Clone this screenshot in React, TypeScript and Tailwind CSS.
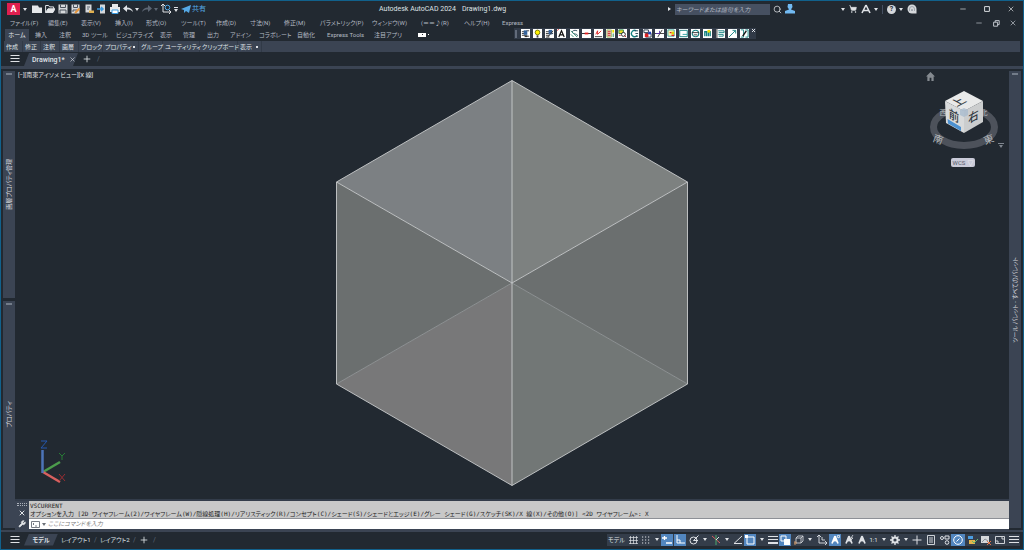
import React from "react";
import {
  LuMinus,
  LuPlus,
  LuSearch,
  LuShoppingCart,
  LuWrench,
  LuX,
} from "react-icons/lu";

interface IconProps {
  children: React.ReactNode;
  size?: string;
}

const Icon: React.FC<IconProps> = ({ children, size = "size-[10px]" }) => (
  <svg viewBox="0 0 10 10" className={`${size} shrink-0`} fill="none" stroke="currentColor">
    {children}
  </svg>
);

const Caret = () => (
  <svg viewBox="0 0 4 3" className="h-[3px] w-1 shrink-0" fill="currentColor">
    <path d="M0 0h4L2 3z" />
  </svg>
);

const quickAccess = [
  {
    label: "新規作成",
    icon: (
      <path d="M0 1.500h6l1 2h3V9H0z" fill="#e6e8ea" stroke="none" />
    ),
  },
  {
    label: "開く",
    icon: (
      <>
        <path d="M.6 8.500v-7h3l1 1.400h4v2" />
        <path d="M.6 8.500 3 4.800h7L8 8.500z" fill="#e6e8ea" />
      </>
    ),
  },
  {
    label: "上書き保存",
    icon: (
      <>
        <path d="M.5 .5h9v9h-9z" fill="#d5d8db" stroke="none" />
        <path d="M2.500 .5v3h5v-3M2 9.500V6h6v3.500" stroke="#4a525d" />
      </>
    ),
  },
  {
    label: "名前を付けて保存",
    icon: (
      <>
        <path d="M.5 .5h8v9h-8z" fill="#d5d8db" stroke="none" />
        <path d="M2.500 .5v3h4v-3M2 8V6h4" stroke="#4a525d" />
        <path d="m4 9 4.500-4.500" stroke="#e4953b" strokeWidth="2" />
      </>
    ),
  },
  {
    label: "Web から開く",
    icon: (
      <>
        <path d="M1.500 .5h6v8h-6z" fill="#d5d8db" stroke="none" />
        <path d="M3 3h3M3 5h2" stroke="#5c6673" />
        <path d="M5 9V6.500h5V9z" fill="#e0b050" stroke="none" />
      </>
    ),
  },
  {
    label: "Web に保存",
    icon: (
      <>
        <path d="M3 .5h5v9H3z" fill="#d5d8db" stroke="none" />
        <path d="M0 5h5M4 3l2 2-2 2" stroke="#3b9be0" strokeWidth="1.500" />
      </>
    ),
  },
  {
    label: "印刷",
    icon: (
      <>
        <path d="M2 0h6v3H2zM0 3h10v5H0z" fill="#e6e8ea" stroke="none" />
        <path d="M2 6h6v3.500H2z" fill="#fff" stroke="#3b9be0" />
      </>
    ),
  },
];

const menus = [
  { label: "ファイル(F)", width: "w-[38px]" },
  { label: "編集(E)", width: "w-[33px]" },
  { label: "表示(V)", width: "w-[34px]" },
  { label: "挿入(I)", width: "w-[31px]" },
  { label: "形式(O)", width: "w-[35px]" },
  { label: "ツール(T)", width: "w-[35px]" },
  { label: "作成(D)", width: "w-[34px]" },
  { label: "寸法(N)", width: "w-[34px]" },
  { label: "修正(M)", width: "w-[36px]" },
  { label: "パラメトリック(P)", width: "w-[52px]" },
  { label: "ウィンドウ(W)", width: "w-[49px]" },
  { label: "(＝＝♪(R)", width: "w-[43px]" },
  { label: "ヘルプ(H)", width: "w-[38px]" },
  { label: "Express", width: "w-[30px]" },
];

const ribbonTabs = [
  { label: "挿入", width: "w-[24px]" },
  { label: "注釈", width: "w-[23px]" },
  { label: "3D ツール", width: "w-[34px]" },
  { label: "ビジュアライズ", width: "w-[44px]" },
  { label: "表示", width: "w-[23px]" },
  { label: "管理", width: "w-[24px]" },
  { label: "出力", width: "w-[23px]" },
  { label: "アドイン", width: "w-[29px]" },
  { label: "コラボレート", width: "w-[38px]" },
  { label: "自動化", width: "w-[30px]" },
  { label: "Express Tools", width: "w-[47px]" },
  { label: "注目アプリ", width: "w-[44px]" },
];

const panels = [
  { label: "作成", width: "w-[19px]" },
  { label: "修正", width: "w-[18px]" },
  { label: "注釈", width: "w-[19px]" },
  { label: "画層", width: "w-[19px]" },
  { label: "ブロック", width: "w-[24px]" },
  { label: "プロパティ", width: "w-[36px]", more: true },
  { label: "グループ", width: "w-[24px]" },
  { label: "ユーティリティ", width: "w-[37px]" },
  { label: "クリップボード", width: "w-[38px]" },
  { label: "表示", width: "w-[24px]", more: true },
];

const expressTools = [
  { label: "画層を分離", icon: <><path d="M1 3h4M1 5h4M1 7h4M6 2h3M6 8h3" stroke="#333" /><path d="M3 1.500h4v5H3z" fill="#35639b" stroke="none" /><path d="M4 7h3v2H4z" fill="#333" stroke="none" /></> },
  { label: "画層を表示", icon: <><circle cx="5" cy="3.800" r="2.600" fill="#fff200" stroke="#777700" /><path d="M4 7h2v2.500H4z" fill="#444" stroke="none" /></> },
  { label: "画層を非表示", icon: <><path d="M1 3h4M1 5h8M1 7h4M1 9h4" stroke="#333" /><path d="M4 1h4v5H4z" fill="#35639b" stroke="none" /><path d="m3 9 6-7" stroke="#333" /></> },
  { label: "円弧文字", icon: <><path d="m2 9 3-7 3 7M3 6.500h4" stroke="#111" strokeWidth="1.300" /><path d="M0 2 2 0" stroke="#d33" /></> },
  { label: "文字マスク", icon: <><path d="M8 2C3 0 1 4 4 5s5 1 4 3" stroke="#245" /><path d="m1 2 7 7M1 6l3 3" stroke="#2b8a72" /></> },
  { label: "文字調整", icon: <><path d="M0 5h10" stroke="#222" /><path d="M3 5h4" stroke="#e02020" strokeWidth="2" /></> },
  { label: "寸法", icon: <><path d="M1 8.500h8" stroke="#333" /><path d="m2 6 2-4v4l4-4" stroke="#d22" /></> },
  { label: "ブロック置換", icon: <><path d="M1 1h5v8H1z" fill="#f3c2b7" stroke="#9b6" /><path d="M2 3h3M2 5h3M2 7h3" stroke="#c33" /><path d="M7 1h2v3H7z" fill="#f0df00" stroke="none" /><path d="M8 5v4" stroke="#187a48" /></> },
  { label: "オブジェクト抽出", icon: <><path d="M1 1h5v4H1z" fill="#e8da28" stroke="#1e7f4e" /><circle cx="6" cy="6" r="2.200" fill="#fff" stroke="#222" /><path d="m7 7 2 2M1 7h2" stroke="#b22" /></> },
  { label: "雲マーク", icon: <><path d="M7 2a3.500 3.500 0 1 0 1 5" stroke="#138080" strokeWidth="1.500" /><path d="M5 2h4M6 5h3M6 8h3" stroke="#245" /></> },
  { label: "クリップ", icon: <><path d="M1 1h5v3H1zM3 5h6v4H3z" stroke="#234" /><path d="M2 5h4v4H2z" fill="#d22" stroke="none" /><path d="M6 3h3v3H6z" fill="#2742b8" stroke="none" /></> },
  { label: "トリム", icon: <><path d="M0 5h10M8 1 3 9" stroke="#333" /><path d="M1 5h4M5 2v3" stroke="#5c35b0" /></> },
  { label: "ハッチング", icon: <><path d="M1 1h7v7H1z" fill="#fff6b0" stroke="#38a0a0" /><path d="M5 3h3v3H5z" fill="#e4d400" stroke="none" /><path d="M5 7h3M3 4h2" stroke="#d22" strokeWidth="1.500" /></> },
  { label: "ワイプアウト", icon: <><path d="M.8 1.500h8.400v7H.8z" stroke="#138080" /><path d="M4 6h5" stroke="#2aa0a0" /></> },
  { label: "オブジェクト選択", icon: <><circle cx="5" cy="5" r="3.600" stroke="#138080" strokeWidth="1.300" /><path d="M1 4h8M3 6.500h4" stroke="#333" /></> },
  { label: "高速選択", icon: <><path d="M2 8V3h2v5M6 8V3h2v5" stroke="#138080" strokeWidth="1.500" /><path d="M5 1h3v3H5z" fill="#efe000" stroke="none" /></> },
  { label: "属性書き出し", icon: <><path d="M1 0v10" stroke="#222" /><path d="M2.500 2H9v2H3M2.500 6H8v2H3" stroke="#138080" /></> },
  { label: "ストレッチ", icon: <><path d="m1 9 7-7M5 1.500h3.500V5" stroke="#138080" /></> },
  { label: "図面比較", icon: <><path d="M1 1h3v8H1M6 1h3v8H6" stroke="#138080" /><path d="m3 8 4-6" stroke="#111" strokeWidth="1.500" /></> },
];

const AnnoPath = () => (
  <path d="M5 1 2 8.500M5 1l3 7.500M3.500 6 5 5l1.500 1" strokeWidth="1.700" />
);

const statusItems: {
  label: string;
  width: string;
  icon?: React.ReactNode;
  text?: string;
  on?: boolean;
}[] = [
  { label: "モデル空間", width: "w-[19px]", text: "モデル" },
  { label: "グリッド", width: "w-[13px]", icon: <path d="M2.500 1v8M5.500 1v8M8.500 1v8M1 2.500h9M1 5.500h9M1 8.500h9" strokeWidth=".7" /> },
  { label: "スナップ", width: "w-[13px]", icon: <path d="M1 2h8M1 5h8M1 8h8" strokeDasharray="1.200 1.800" strokeWidth="1.200" /> },
  { label: "スナップの設定", width: "w-[9px]" },
  { label: "ダイナミック入力", width: "w-[13px]", on: true, icon: <path d="M0 3h5M2.500 1v4M4 8h6" strokeWidth="1.300" /> },
  { label: "直交モード", width: "w-[13px]", on: true, icon: <path d="M2 0v8h8M2 5h3v3" /> },
  { label: "極トラッキング", width: "w-[13px]", icon: <><circle cx="4.500" cy="5.500" r="3.500" /><path d="m4.500 5.500 5-5M4.500 5.500H9" /></> },
  { label: "極トラッキングの設定", width: "w-[9px]" },
  { label: "アイソメ作図", width: "w-[13px]", icon: <><path d="m1 1 8 7" stroke="#d76060" /><path d="M5 0v10" stroke="#4aa86c" /><path d="m5 5 3-3" /></> },
  { label: "アイソメ作図の設定", width: "w-[9px]" },
  { label: "オブジェクト スナップ トラッキング", width: "w-[13px]", icon: <path d="M9 1 1 8.500h8" /> },
  { label: "オブジェクト スナップ", width: "w-[13px]", on: true, icon: <><path d="M2 2h7v7H2z" /><path d="M0 0h3v3H0z" fill="currentColor" stroke="none" /></> },
  { label: "オブジェクト スナップの設定", width: "w-[9px]" },
  { label: "線の太さ", width: "w-[13px]", icon: <><path d="M0 1.500h10M0 4.500h10" /><path d="M0 8h10" strokeWidth="2" /></> },
  { label: "透過性", width: "w-[13px]", on: true, icon: <><path d="M1 1h5v5H1z" /><path d="M4 4h6v6H4z" fill="#fff" stroke="none" /></> },
  { label: "3D オブジェクト スナップ", width: "w-[13px]", icon: <><path d="M2 3h5v5H2zM2 3l2-2h5v5L7 8M7 3l2-2" strokeWidth=".8" /><path d="M0 7h2v2H0z" stroke="#c79469" /></> },
  { label: "3D オブジェクト スナップの設定", width: "w-[9px]" },
  { label: "ダイナミック UCS", width: "w-[15px]", icon: <path d="M2 0v8h8M5 2v3h3M0 2l2-2 2 2M8 6l2 2-2 2" strokeWidth=".9" /> },
  { label: "注釈オブジェクトを表示", width: "w-[13px]", on: true, icon: <><AnnoPath /><circle cx="8.500" cy="1.500" r="1.200" /></> },
  { label: "尺度を自動的に追加", width: "w-[13px]", icon: <><AnnoPath /><path d="m9 0-2 3h2L7 5" strokeWidth=".8" /></> },
  { label: "注釈尺度", width: "w-[13px]", icon: <AnnoPath /> },
  { label: "ビューの尺度", width: "w-[11px]", text: "1:1" },
  { label: "尺度リスト", width: "w-[9px]" },
  { label: "ワークスペースの切り替え", width: "w-[13px]", icon: <><circle cx="5" cy="5" r="2.600" strokeWidth="2" /><path d="M5 0v2M5 8v2M0 5h2M8 5h2M1.500 1.500l1.500 1.500M7 7l1.500 1.500M8.500 1.500 7 3M3 7 1.500 8.500" strokeWidth="1.300" /></> },
  { label: "ワークスペースの設定", width: "w-[9px]" },
  { label: "注釈モニター", width: "w-[13px]", icon: <path d="M5 .5v9M.5 5h9" /> },
  { label: "クイック プロパティ", width: "w-[15px]", icon: <path d="M1.500 .5h7v9h-7zM3 3h4M3 5h4M3 7h4" strokeWidth=".9" /> },
  { label: "オブジェクトを選択表示", width: "w-[13px]", icon: <><circle cx="2" cy="3" r="1.500" /><path d="M5 1h4v3H5z" /><circle cx="7" cy="7.500" r="1.800" /></> },
  { label: "グラフィックス パフォーマンス", width: "w-[15px]", on: true, icon: <><circle cx="5" cy="5" r="4.300" /><path d="m3.500 6.500 3-3" /></> },
  { label: "クリーン スクリーン", width: "w-[13px]", icon: <><path d="M0 1h5v3H0z" fill="#4b9de0" stroke="none" /><path d="M1 5h6v4H1z" fill="#e4b54c" stroke="none" /><path d="m4 6 2 2 4-4" stroke="#65b96d" /></> },
  { label: "図面の通知", width: "w-[13px]", icon: <><path d="M0 1h8v7H0z" fill="#d5d8db" stroke="none" /><path d="m1 7 3-3 3 2" stroke="#8b9098" /><path d="m6 6 4 4M10 6l-4 4" stroke="#e0764b" /></> },
  { label: "全画面表示", width: "w-[15px]", icon: <path d="M.5 1.500h9v7h-9zM6 3h2v2M4 7H2V5" strokeWidth=".9" /> },
  { label: "カスタマイズ", width: "w-[13px]", icon: <path d="M0 1.500h10M0 4.500h10M0 7.500h10" strokeWidth="1.100" /> },
];

const TitleBar = () => (
  <header className="flex h-4 shrink-0 items-center text-[#dfe2e6]">
    <div className="flex w-[378px] shrink-0 items-center gap-[3px] pl-[6px]">
      <button
        aria-label="アプリケーション メニュー"
        className="flex h-3 w-[13px] items-center justify-center bg-[#e01f4f] text-[9px] font-bold leading-3 text-white"
      >
        A
      </button>
      <Caret />
      <div className="flex items-center gap-[3px] pl-[2px]">
        {quickAccess.map((q) => (
          <button key={q.label} aria-label={q.label}>
            <Icon>{q.icon}</Icon>
          </button>
        ))}
        <button aria-label="元に戻す" className="flex items-center gap-[2px]">
          <Icon>
            <path d="M4 1 0 4.500 4 8V5.500c3 0 4 .5 6 2.500-.5-3-3-4.500-6-4.500z" fill="currentColor" stroke="none" />
          </Icon>
          <Caret />
        </button>
        <button aria-label="やり直し" className="flex items-center gap-[2px] text-[#5c6673]">
          <Icon>
            <path d="m6 1 4 3.500L6 8V5.500C3 5.500 2 6 0 8c.5-3 3-4.500 6-4.500z" fill="currentColor" stroke="none" />
          </Icon>
          <Caret />
        </button>
        <button aria-label="UCS アイコン">
          <Icon>
            <path d="M2 0v8h8M0 2l2-2 2 2M8 6l2 2-2 2" />
            <circle cx="6.500" cy="3.500" r="2.300" stroke="#4fa9e8" />
          </Icon>
        </button>
      </div>
      <button aria-label="カスタマイズ" className="flex flex-col items-center gap-px">
        <span className="h-px w-1 bg-current" />
        <Caret />
      </button>
      <button className="flex items-center gap-px whitespace-nowrap text-[#55a9e6]">
        <Icon>
          <path d="m0 5 10-4-2 8-3-2-2 2V6z" fill="currentColor" stroke="none" />
        </Icon>
        共有
      </button>
    </div>
    <h1 className="flex gap-[6px] whitespace-nowrap">
      <span>Autodesk AutoCAD 2024</span>
      <span>Drawing1.dwg</span>
    </h1>
    <div className="ml-auto flex items-center">
      <svg viewBox="0 0 3 4" className="mr-1 h-1 w-[3px]" fill="currentColor">
        <path d="M0 0v4l3-2z" />
      </svg>
      <input
        aria-label="検索"
        placeholder="キーワードまたは語句を入力"
        className="h-[11px] w-[95px] bg-[#465061] px-px text-[6px] italic placeholder:text-[#b4bac3]"
      />
      <button aria-label="検索を実行" className="ml-[3px]">
        <LuSearch className="size-[9px]" />
      </button>
      <button aria-label="サインイン" className="ml-[3px] text-[#72baf2]">
        <Icon>
          <path d="M3 0h4l.5 3L6 5.500 10 7v2.500H0V7l4-1.500L2.500 3z" fill="currentColor" stroke="none" />
        </Icon>
      </button>
      <div className="ml-[46px] flex items-center gap-1">
        <Caret />
        <button aria-label="Autodesk App Store">
          <LuShoppingCart className="size-2" fill="currentColor" />
        </button>
        <button aria-label="Autodesk アプリ" className="flex items-center gap-[3px]">
          <Icon>
            <path d="M5 1 1 9M5 1l4 8M2 6.500h6" strokeWidth="1.600" />
          </Icon>
          <Caret />
        </button>
        <span className="h-[9px] w-px bg-[#465061]" />
        <button aria-label="ヘルプ" className="flex items-center gap-[3px]">
          <span className="flex size-[9px] items-center justify-center rounded-full bg-[#d5d8db] font-bold leading-none text-[#222931]">
            ?
          </span>
          <Caret />
        </button>
        <button aria-label="アシスタント">
          <Icon>
            <path d="M5 .5a4.500 4.500 0 1 0 0 9h4.500V5A4.500 4.500 0 0 0 5 .5" fill="#d5d8db" stroke="none" />
            <path d="M2.500 7V5a2.500 2.500 0 0 1 5 0v2M4.500 7V5.500h1V7" stroke="#9299a2" strokeWidth=".8" />
          </Icon>
        </button>
      </div>
      <div className="ml-[42px] mr-2 flex gap-4">
        <button aria-label="最小化"><LuMinus className="size-2" /></button>
        <button aria-label="最大化">
          <Icon size="size-2">
            <path d="M2 2h6v6H2z" strokeWidth="1.200" />
          </Icon>
        </button>
        <button aria-label="閉じる"><LuX className="size-2" /></button>
      </div>
    </div>
  </header>
);

const MenuBar = () => (
  <nav className="flex h-[11px] shrink-0 items-center pl-[9px] text-[6px] text-[#b4bac3]">
    {menus.map((m) => (
      <button key={m.label} className={`${m.width} whitespace-nowrap text-left`}>
        {m.label}
      </button>
    ))}
    <div className="ml-auto mr-[6px] flex gap-[9px] text-[#c4c9d0]">
      <button aria-label="図面を最小化"><LuMinus className="size-2" /></button>
      <button aria-label="図面を元に戻す">
        <Icon size="size-2">
          <path d="M2 4h5v5H2zM4 4V2h5v5H7" strokeWidth="1.200" />
        </Icon>
      </button>
      <button aria-label="図面を閉じる"><LuX className="size-2" /></button>
    </div>
  </nav>
);

const Ribbon = () => (
  <>
    <div className="flex h-[13px] shrink-0 items-center pl-1 text-[6px] text-[#b4bac3]">
      <button className="mr-[6px] h-3 w-6 self-end bg-[#3b4453] text-[#e3e6e9]">ホーム</button>
      {ribbonTabs.map((t) => (
        <button key={t.label} className={`${t.width} whitespace-nowrap text-left`}>
          {t.label}
        </button>
      ))}
      <button aria-label="リボンの表示" className="flex items-center gap-[2px]">
        <span className="flex h-1 w-2 items-center justify-center bg-white text-[#222931]">
          <span className="size-px bg-current" />
        </span>
        <span className="size-px bg-white" />
      </button>
      <div className="ml-[85px] flex h-[11px] w-[242px] items-center self-start bg-[#313a47] pl-px">
        <span className="mr-1 h-2 w-[2px] bg-[#626b7a]" />
        <div className="flex flex-1 justify-between">
          {expressTools.map((e) => (
            <button key={e.label} aria-label={e.label} className="bg-white">
              <Icon size="size-[9px]">{e.icon}</Icon>
            </button>
          ))}
        </div>
        <button aria-label="ツールバーを閉じる" className="ml-[2px] self-start text-white">
          <LuX className="size-[5px]" strokeWidth={4} />
        </button>
      </div>
    </div>
    <div className="mx-[3px] flex h-[11px] shrink-0 items-center bg-[#3b4453] text-[6px] text-[#dfe2e6]">
      {panels.map((p) => (
        <button
          key={p.label}
          className={`${p.width} flex h-full items-center justify-between whitespace-nowrap border-r border-[#313a47] pl-[2px]`}
        >
          {p.label}
          {p.more && <span className="mr-[3px] size-[2px] bg-current" />}
        </button>
      ))}
    </div>
  </>
);

const MenuLines = () => (
  <Icon>
    <path d="M.5 1.500h9M.5 4.500h9M.5 7.500h9" strokeWidth="1.100" />
  </Icon>
);

const FileTabs = () => (
  <div className="flex h-[14px] shrink-0 items-center pl-[9px] text-[#dfe2e6]">
    <button aria-label="ファイル タブ メニュー"><MenuLines /></button>
    <div className="ml-1 flex h-[13px] w-[54px] items-center gap-1 self-end bg-[#3b4453] pl-2 font-medium [clip-path:polygon(5px_0,100%_0,49px_100%,0_100%)]">
      <span>Drawing1*</span>
      <button aria-label="Drawing1 を閉じる"><LuX className="size-[7px]" /></button>
    </div>
    <button aria-label="新規図面" className="ml-1"><LuPlus className="size-[10px]" /></button>
    <span className="ml-[5px] text-[#5d6878]">/</span>
  </div>
);

interface PaletteProps {
  title: string;
}

const Palette: React.FC<PaletteProps> = ({ title }) => (
  <section className="relative flex w-3 flex-1 items-center justify-center bg-[#3b4453] text-[6px] text-[#d5d8dd]">
    <span className="absolute top-[2px] h-[2px] w-[6px] bg-[#737c89]" />
    <h2 className="rotate-180 whitespace-nowrap leading-3 [text-orientation:sideways] [writing-mode:vertical-rl]">
      {title}
    </h2>
  </section>
);

const Cube = () => (
  <svg viewBox="0 0 352 406" className="mx-auto mt-[11px] h-[406px] w-[352px]">
    <path d="M176 203V.5L.5 102z" fill="#7c8083" />
    <path d="M176 203V.5L351.500 102z" fill="#7d8180" />
    <path d="M176 203 .5 102v202z" fill="#6b6f6f" />
    <path d="m176 203 175.500-101v202z" fill="#6b6f6f" />
    <path d="M176 203 .5 304 176 405.500z" fill="#787879" />
    <path d="m176 203 175.500 101L176 405.500z" fill="#727776" />
    <path d="M176 203 .5 304M176 203l175.500 101" stroke="#9b9e9f" strokeWidth=".8" />
    <path
      d="M176 .5.5 102v202L176 405.500 351.500 304V102zV405.500M.5 102 176 203l175.500-101"
      fill="none"
      stroke="#c9cccd"
      strokeWidth=".9"
    />
  </svg>
);

const ViewCube = () => (
  <div className="absolute right-px top-[3px] flex w-[82px] flex-col text-[#7f868f]">
    <button aria-label="ホーム ビュー">
      <svg viewBox="0 0 10 10" className="size-[9px]" fill="#858a90">
        <path d="M5 0 0 5h1.500v5H4V6.500h2V10h2.500V5H10z" />
      </svg>
    </button>
    <svg viewBox="0 0 76 70" className="h-[70px] w-[76px]" role="img" aria-label="ビューキューブ">
      <ellipse cx="38" cy="46" rx="30.500" ry="18.500" fill="none" stroke="#4d525b" strokeWidth="7" />
      <g fontSize="8" fill="#b6babd" textAnchor="middle">
        <text x="17" y="34" fontSize="7">西</text>
        <text x="58" y="34" fontSize="7">北</text>
        <text x="12" y="62" fontSize="10" transform="rotate(20 12 59)">南</text>
        <text x="63" y="62" fontSize="10" transform="rotate(-20 63 59)">東</text>
      </g>
      <path d="m38 10 19 10-19 10-19-10z" fill="#e8e9e9" />
      <path d="m19 20 19 10v22L20 42z" fill="#d8dadb" />
      <path d="m57 20-19 10v22l19-11z" fill="#cbcdce" />
      <path d="m21.500 38 13.500 8v4l-13-7.500z" fill="#4c91d0" />
      <path d="m38 27 4 2v5l-4 2-4-2v-5z" fill="#a9bbce" opacity=".8" />
      <g fill="#333a42" textAnchor="middle" fontWeight="500">
        <text transform="matrix(.87 .48 0 1 28 39)" fontSize="12">前</text>
        <text transform="matrix(.87 -.48 0 1 47.500 40)" fontSize="12">右</text>
        <text transform="matrix(.87 -.45 .87 .45 36 23)" fontSize="12">上</text>
      </g>
    </svg>
    <div className="-mt-[8px] flex justify-end pr-1">
      <button aria-label="ビューキューブ メニュー" className="flex flex-col items-center gap-px">
        <span className="h-px w-[6px] bg-current" />
        <Caret />
      </button>
    </div>
    <button className="mt-[10px] ml-[25px] flex h-[9px] w-6 items-center justify-center gap-[2px] rounded-[2px] bg-[#c9cad8] text-[6px] leading-none text-[#555b69]">
      WCS
      <span className="text-white">▽</span>
    </button>
  </div>
);

const UcsIcon = () => (
  <svg viewBox="0 0 30 50" className="absolute bottom-[10px] left-6 h-[50px] w-[30px]" fill="none">
    <path d="m4 33 17-10" stroke="#4c9c4c" strokeWidth="2.500" />
    <path d="m4 33 17 10" stroke="#d8605f" strokeWidth="2.500" />
    <path d="M3.500 34V11" stroke="#4d74b8" strokeWidth="2.500" />
    <path d="M2 2h6L2 9h6" stroke="#2458b0" />
    <path d="m20 14 3 3 3-3M23 17v4" stroke="#267a35" />
    <path d="m20 35 6 7M26 35l-6 7" stroke="#9a2d31" />
  </svg>
);

const CommandLine = () => (
  <section className="flex shrink-0 border-t-2 border-[#333c4a] bg-[#3b4453]">
    <div className="flex w-[14px] flex-col items-center justify-between py-[2px] text-[#e3e6e9]">
      <span className="h-[3px] w-[10px] border-y border-dotted border-[#aab0b9]" />
      <LuX className="size-2" strokeWidth={3} />
      <LuWrench className="size-2" fill="currentColor" />
    </div>
    <div className="flex-1 pb-px">
      <div className="bg-[#c8c8c8] pl-px pt-px font-['DejaVu_Sans_Mono','Noto_Sans_CJK_JP',monospace] text-[6px] leading-2 text-[#1c1c1c]">
        <p>VSCURRENT</p>
        <p className="whitespace-nowrap">
          オプションを入力 [2D ワイヤフレーム(2)/ワイヤフレーム(W)/隠線処理(H)/リアリスティック(R)/コンセプト(C)/シェード(S)/シェードとエッジ(E)/グレー シェード(G)/スケッチ(SK)/X 線(X)/その他(O)] &lt;2D ワイヤフレーム&gt;: X
        </p>
      </div>
      <label className="flex h-[11px] items-center gap-[2px] border-t border-[#8d9096] bg-white pl-[2px] text-[#6d7178]">
        <svg viewBox="0 0 9 7" className="h-[7px] w-[9px]" fill="none" stroke="#777c84">
          <path d="M.5 .5h8v6h-8zM2 2l1 1-1 1M4 5h2" />
        </svg>
        <Caret />
        <input
          aria-label="コマンド"
          placeholder="ここにコマンドを入力"
          className="h-[10px] flex-1 text-[6px] italic placeholder:text-[#7a7a7a]"
        />
      </label>
    </div>
  </section>
);

const StatusBar = () => (
  <footer className="flex h-[19px] shrink-0 items-center border-t-2 border-[#3b4453] pb-[2px] pl-[9px] text-[#dfe2e6]">
    <button aria-label="レイアウト メニュー"><MenuLines /></button>
    <button className="ml-1 h-3 w-[34px] bg-[#3b4453] text-[6px] font-semibold [clip-path:polygon(5px_0,100%_0,29px_100%,0_100%)]">
      モデル
    </button>
    <button className="ml-[3px] w-[33px] whitespace-nowrap text-left text-[6px]">レイアウト1</button>
    <span className="w-[6px] text-[#5d6878]">/</span>
    <button className="w-[33px] whitespace-nowrap text-left text-[6px]">レイアウト2</button>
    <span className="w-[6px] text-[#5d6878]">/</span>
    <button aria-label="新規レイアウト"><LuPlus className="size-[10px]" /></button>
    <span className="ml-1 text-[#5d6878]">/</span>
    <div className="ml-auto mr-[3px] flex h-3 bg-[#343d4a]">
      {statusItems.map((s) => (
        <button
          key={s.label}
          aria-label={s.label}
          className={`${s.width} flex items-center justify-center whitespace-nowrap text-[6px] ${
            s.on ? "border-r border-[#343d4a] bg-[#5286bf] text-white" : ""
          }`}
        >
          {s.text ?? (s.icon ? <Icon>{s.icon}</Icon> : <Caret />)}
        </button>
      ))}
    </div>
  </footer>
);

const App: React.FC = () => (
  <div
    lang="ja"
    className="flex h-screen flex-col overflow-hidden border border-[#11618c] bg-[#222931] font-[Roboto,'Noto_Sans_CJK_JP',sans-serif] text-[7px] leading-[10px] [font-feature-settings:'palt']"
  >
    <TitleBar />
    <MenuBar />
    <Ribbon />
    <FileTabs />
    <div className="h-[3px] shrink-0 bg-[#3b4453]" />
    <div className="flex min-h-0 flex-1">
      <aside className="flex flex-col gap-[3px] py-[2px] pl-[2px]">
        <Palette title="画層プロパティ管理" />
        <Palette title="プロパティ" />
      </aside>
      <div className="flex min-w-0 flex-1 flex-col">
        <main className="relative min-h-0 flex-1">
          <p className="absolute left-[3px] top-px text-[6px] text-[#e3e6e9]">[−][南東アイソメ ビュー][X 線]</p>
          <Cube />
          <ViewCube />
          <UcsIcon />
        </main>
        <CommandLine />
      </div>
      <aside className="flex flex-col py-[2px] pr-[2px]">
        <Palette title="ツール パレット - すべてのパレット" />
      </aside>
    </div>
    <StatusBar />
  </div>
);

export default App;
